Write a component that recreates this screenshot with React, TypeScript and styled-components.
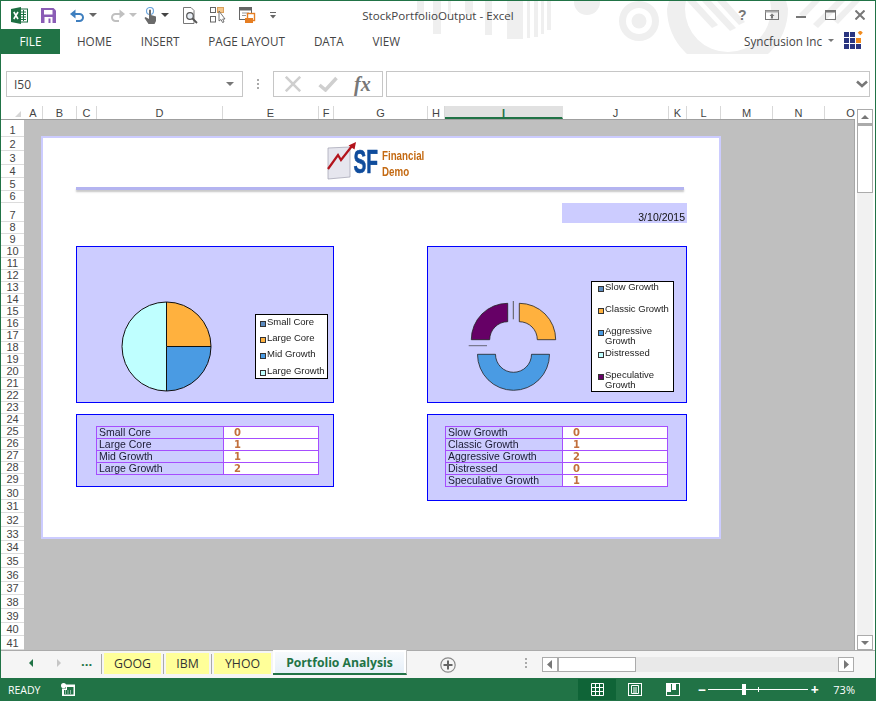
import React from 'react';
import styled, { createGlobalStyle } from 'styled-components';

const Global = createGlobalStyle`
  html, body {
    margin: 0;
    padding: 0;
    overflow: hidden;
    background: white;
  }
`;

const GREEN = '#217346';
const UI_FONT = '"Open Sans", "Noto Sans", sans-serif';
const CELL_FONT = '"Liberation Sans", Arial, sans-serif';

const Window = styled.div`
  width: 876px;
  height: 701px;
  box-sizing: border-box;
  border: 1px solid ${GREEN};
  border-bottom: none;
  display: flex;
  flex-direction: column;
  background: white;
  font-family: ${UI_FONT};
  color: #444;
  overflow: hidden;
`;

const Header = styled.div`
  position: relative;
  height: 53px;
  flex-shrink: 0;
`;

const Pattern = styled.svg`
  position: absolute;
  left: 0;
  top: 0;
  z-index: 0;
`;

const TitleBar = styled.div`
  position: relative;
  z-index: 1;
  height: 28px;
  display: grid;
  grid-template-columns: 1fr auto 1fr;
  align-items: center;
`;

const Quick = styled.div`
  display: flex;
  align-items: center;
  padding-left: 10px;
`;

const QuickSlot = styled.div<{ $w: number }>`
  width: ${p => p.$w}px;
  height: 20px;
  flex-shrink: 0;
  display: flex;
  align-items: center;
`;

const Title = styled.div`
  font-size: 11.6px;
  color: #444;
  white-space: nowrap;
`;

const Controls = styled.div`
  display: flex;
  justify-content: flex-end;
  align-items: center;
`;

const ControlSlot = styled.div`
  width: 29.5px;
  display: flex;
  justify-content: center;
  align-items: center;
`;

const TabRow = styled.div`
  position: relative;
  z-index: 1;
  height: 25px;
  display: flex;
  align-items: center;
  font-size: 11.7px;
`;

const FileTab = styled.div`
  width: 59px;
  height: 25px;
  box-sizing: border-box;
  padding-bottom: 2px;
  background: ${GREEN};
  color: white;
  display: flex;
  align-items: center;
  justify-content: center;
  margin-right: 17px;
`;

const RibbonTab = styled.div`
  margin-right: 29px;
  padding-bottom: 2px;
  white-space: nowrap;
`;

const Account = styled.div`
  margin-left: auto;
  display: flex;
  align-items: center;
  padding: 0 12px 2px 0;
  white-space: nowrap;
`;

const AccountCaret = styled.div`
  width: 0;
  height: 0;
  border-left: 3px solid transparent;
  border-right: 3px solid transparent;
  border-top: 3px solid #777;
  margin: 0 10px 0 6px;
`;

const FormulaBar = styled.div`
  height: 26px;
  margin-top: 17px;
  padding: 0 5px;
  display: flex;
  flex-shrink: 0;
  align-items: stretch;
`;

const NameBox = styled.div`
  width: 237px;
  box-sizing: border-box;
  border: 1px solid #c6c6c6;
  display: flex;
  align-items: center;
  justify-content: space-between;
  padding: 0 8px 0 7px;
  font-size: 12px;
  color: #444;
`;

const Caret = styled.div<{ $c?: string }>`
  width: 0;
  height: 0;
  border-left: 4px solid transparent;
  border-right: 4px solid transparent;
  border-top: 4px solid ${p => p.$c || '#777'};
`;

const GripDots = styled.div`
  width: 30px;
  display: flex;
  flex-direction: column;
  align-items: center;
  justify-content: center;
  gap: 2px;
`;

const GripDot = styled.div`
  width: 2px;
  height: 2px;
  background: #aaa;
`;

const FormulaButtons = styled.div`
  width: 110px;
  box-sizing: border-box;
  border: 1px solid #c6c6c6;
  display: flex;
  align-items: center;
  justify-content: space-around;
  padding: 0 3px;
  margin-right: 3px;
`;

const Fx = styled.span`
  font-family: "Liberation Serif", serif;
  font-style: italic;
  font-weight: bold;
  font-size: 20px;
  color: #777;
`;

const FormulaInput = styled.div`
  flex: 1;
  border: 1px solid #c6c6c6;
  display: flex;
  align-items: center;
  justify-content: flex-end;
  padding-right: 1px;
`;

const Main = styled.div`
  flex: 1;
  min-height: 0;
  margin-top: 9px;
  display: flex;
`;

const GridArea = styled.div`
  width: 854px;
  display: flex;
  flex-direction: column;
`;

const ColumnRow = styled.div`
  height: 13px;
  display: flex;
  flex-shrink: 0;
  box-sizing: content-box;
  border-bottom: 1px solid #9f9f9f;
  overflow: hidden;
`;

const Corner = styled.div`
  width: 23px;
  flex-shrink: 0;
  display: flex;
  align-items: flex-end;
  justify-content: flex-end;
  box-sizing: border-box;
  padding: 0 3px 2px 0;
`;

const CornerMark = styled.div`
  width: 0;
  height: 0;
  border-bottom: 6px solid #d6d6d6;
  border-left: 6px solid transparent;
`;

const ColumnCell = styled.div<{ $w: number; $active?: boolean }>`
  width: ${p => p.$w}px;
  flex-shrink: 0;
  box-sizing: border-box;
  border-right: 1px solid ${p => (p.$active ? '#e1e1e1' : '#d8d8d8')};
  border-bottom: ${p => (p.$active ? `2px solid ${GREEN}` : 'none')};
  background: ${p => (p.$active ? '#e1e1e1' : 'white')};
  color: ${p => (p.$active ? GREEN : '#444')};
  font-weight: ${p => (p.$active ? 'bold' : 'normal')};
  font-family: ${CELL_FONT};
  font-size: 11px;
  line-height: 14px;
  text-align: center;
  overflow: hidden;
`;

const SheetArea = styled.div`
  flex: 1;
  min-height: 0;
  display: flex;
`;

const RowHeaders = styled.div`
  width: 23px;
  flex-shrink: 0;
  display: flex;
  flex-direction: column;
`;

const RowCell = styled.div<{ $h?: number }>`
  ${p => (p.$h ? `height: ${p.$h}px;` : 'flex: 1;')}
  min-height: 0;
  box-sizing: border-box;
  border-bottom: 1px solid #dcdcdc;
  display: flex;
  align-items: flex-end;
  justify-content: center;
  font-family: ${CELL_FONT};
  font-size: 11px;
  line-height: 12px;
  color: #444;
  overflow: hidden;
`;

const Sheet = styled.div`
  flex: 1;
  min-width: 0;
  background: #bfbfbf;
  box-sizing: border-box;
  border-right: 1px solid #a6a6a6;
  padding: 16px 0 0 17px;
`;

const Page = styled.div`
  width: 680px;
  height: 403px;
  box-sizing: border-box;
  background: white;
  border: 2px solid #ccccff;
  padding: 4px 0 0 33px;
  font-family: ${CELL_FONT};
  color: #111;
  filter: blur(0.25px);
`;

const LogoRow = styled.div`
  height: 38px;
  width: 611px;
  display: flex;
  justify-content: center;
  align-items: flex-start;
  padding-right: 11px;
  box-sizing: border-box;
`;

const LogoMark = styled.svg`
  margin-right: -4px;
  flex-shrink: 0;
`;

const SfMark = styled.div`
  width: 29px;
  margin-top: 3px;
  padding-left: 1px;
  box-sizing: border-box;
  font-family: "Liberation Sans", sans-serif;
  font-weight: bold;
  font-size: 33px;
  line-height: 33px;
  color: #0f4c9c;
  -webkit-text-stroke: 0.7px #0f4c9c;
  transform: scaleX(0.58);
  transform-origin: left center;
`;

const LogoWords = styled.div`
  width: 43px;
  padding-top: 6px;
  font-weight: bold;
  font-size: 12.5px;
  line-height: 16px;
  color: #c46a13;
  transform: scaleX(0.78);
  transform-origin: left center;
  white-space: nowrap;
`;

const Rule = styled.div`
  width: 608px;
  height: 3px;
  margin-top: 7px;
  background: #b4b4f0;
  box-shadow: 0 2px 2px rgba(90, 90, 90, 0.35);
`;

const DateRow = styled.div`
  width: 611px;
  display: flex;
  justify-content: flex-end;
  margin-top: 13px;
`;

const DateBox = styled.div`
  width: 125px;
  height: 20px;
  box-sizing: border-box;
  background: #ccccff;
  display: flex;
  align-items: flex-end;
  justify-content: flex-end;
  padding-right: 2px;
  font-size: 10.5px;
  line-height: 11px;
`;

const PanelGrid = styled.div`
  display: grid;
  grid-template-columns: 258px 260px;
  column-gap: 93px;
  row-gap: 11px;
  margin-top: 23px;
`;

const Panel = styled.div<{ $h: number }>`
  height: ${p => p.$h}px;
  box-sizing: border-box;
  background: #ccccff;
  border: 1px solid #0000ff;
`;

const ChartPanel = styled(Panel)<{ $left: number; $gap: number }>`
  display: flex;
  align-items: flex-end;
  padding: 0 0 10px ${p => p.$left}px;
  gap: ${p => p.$gap}px;
`;

const TablePanel = styled(Panel)<{ $left: number }>`
  padding: 11px 0 0 ${p => p.$left}px;
`;

const Legend = styled.div<{ $w: number; $h: number; $up: number; $padTop: number; $padLeft: number }>`
  width: ${p => p.$w}px;
  height: ${p => p.$h}px;
  margin-bottom: ${p => p.$up}px;
  box-sizing: border-box;
  background: white;
  border: 1px solid black;
  padding: ${p => p.$padTop}px 0 0 ${p => p.$padLeft}px;
  font-size: 9.5px;
  line-height: 10px;
  color: #222;
`;

const LegendItem = styled.div<{ $h: number }>`
  height: ${p => p.$h}px;
  display: flex;
  align-items: flex-start;
  gap: 1px;
`;

const Swatch = styled.div<{ $c: string }>`
  width: 4px;
  height: 4px;
  margin-top: 4px;
  flex-shrink: 0;
  background: ${p => p.$c};
  border: 1px solid #333;
`;

const DataTable = styled.table<{ $first: number; $second: number }>`
  border-collapse: collapse;
  table-layout: fixed;
  width: ${p => p.$first + p.$second}px;
  font-size: 10.5px;

  td {
    height: 11px;
    padding: 0;
    border: 1px solid #a64dff;
    line-height: 11px;
    overflow: hidden;
    white-space: nowrap;
  }
`;

const LabelCell = styled.td`
  padding-left: 2px !important;
  color: #1a1a33;
`;

const ValueCell = styled.td`
  padding-left: 10px !important;
  background: white;
  color: #c2703d;
  font-family: "DejaVu Sans", sans-serif;
  font-size: 10px;
  font-weight: bold;
`;

const Scrollbar = styled.div`
  width: 16px;
  margin: 3px 0 0 2px;
  display: flex;
  flex-direction: column;
  background: #f1f1f1;
`;

const ScrollButton = styled.div<{ $size?: number }>`
  width: 16px;
  height: ${p => p.$size || 15}px;
  flex-shrink: 0;
  box-sizing: border-box;
  border: 1px solid #ababab;
  background: white;
  display: flex;
  align-items: center;
  justify-content: center;
`;

const ScrollThumb = styled.div`
  height: 69px;
  box-sizing: border-box;
  background: white;
  border: 1px solid #ababab;
  border-top-width: 2px;
`;

const ScrollFill = styled.div`
  flex: 1;
`;

const UpArrow = styled.div`
  width: 0;
  height: 0;
  border-left: 4px solid transparent;
  border-right: 4px solid transparent;
  border-bottom: 4px solid #777;
`;

const SheetStrip = styled.div`
  height: 28px;
  flex-shrink: 0;
  box-sizing: border-box;
  background: #f5f5f5;
  border-top: 1px solid #ababab;
  display: flex;
  align-items: flex-start;
`;

const SheetNav = styled.div`
  width: 98px;
  height: 24px;
  display: flex;
  align-items: center;
  padding-left: 28px;
  box-sizing: border-box;
`;

const NavArrow = styled.div<{ $dir: 'left' | 'right' }>`
  width: 0;
  height: 0;
  border-top: 4px solid transparent;
  border-bottom: 4px solid transparent;
  ${p =>
    p.$dir === 'left'
      ? `border-right: 4px solid ${GREEN};`
      : `border-left: 4px solid #c6c6c6; margin-left: 24px;`}
`;

const NavMore = styled.div`
  margin-left: 20px;
  color: ${GREEN};
  font-weight: bold;
  font-size: 13px;
  line-height: 13px;
  padding-bottom: 3px;
`;

const TabSep = styled.div`
  width: 1px;
  height: 20px;
  margin: 3px 2px 0;
  background: #aaa;
`;

const SheetTab = styled.div<{ $w: number }>`
  width: ${p => p.$w}px;
  height: 21px;
  margin-top: 2px;
  background: #ffff99;
  display: flex;
  align-items: center;
  justify-content: center;
  font-size: 12.3px;
  color: #333;
`;

const ActiveTab = styled.div`
  width: 134px;
  height: 25px;
  margin: -1px 0 0 2px;
  box-sizing: border-box;
  background: white;
  padding: 0 2px;
  border-bottom: 2px solid ${GREEN};
  border-right: 1px solid #c6c6c6;
`;

const ActiveLabel = styled.div`
  height: 21px;
  margin-top: 2px;
  background: linear-gradient(#f7fafd, #e6eff8);
  display: flex;
  align-items: center;
  justify-content: center;
  font-size: 12.2px;
  font-weight: bold;
  color: ${GREEN};
`;

const AddSheet = styled.div`
  width: 16px;
  height: 16px;
  margin: 5px 0 0 33px;
`;

const StripGrip = styled(GripDots)`
  width: 4px;
  height: 24px;
  margin-left: 68px;
`;

const HScroll = styled.div`
  width: 312px;
  height: 15px;
  margin: 6px 0 0 14px;
  display: flex;
  background: #e9e9e9;
`;

const HThumb = styled.div`
  width: 78px;
  box-sizing: border-box;
  background: white;
  border: 1px solid #ababab;
`;

const StatusBar = styled.div`
  height: 23px;
  flex-shrink: 0;
  background: ${GREEN};
  color: white;
  display: flex;
  align-items: center;
  font-size: 10.5px;
`;

const Ready = styled.div`
  margin-left: 7px;
  width: 53px;
`;

const ViewGroup = styled.div`
  display: flex;
  margin-right: 6px;
`;

const ViewButton = styled.div<{ $on?: boolean }>`
  width: 38px;
  height: 21px;
  background: ${p => (p.$on ? '#0f6437' : 'transparent')};
  display: flex;
  align-items: center;
  justify-content: center;
`;

const ZoomTrack = styled.div`
  position: relative;
  width: 100px;
  height: 1px;
  background: white;
  margin: 0 3px;
`;

const ZoomThumb = styled.div`
  position: absolute;
  left: 34px;
  top: -5px;
  width: 4px;
  height: 11px;
  background: white;
`;

const ZoomTick = styled.div`
  position: absolute;
  left: 50px;
  top: -2px;
  width: 1px;
  height: 5px;
  background: white;
`;

const ZoomSign = styled.div`
  width: 7px;
  display: flex;
  justify-content: center;
  font-weight: bold;
  font-size: 14px;
`;

const ZoomValue = styled.div`
  margin-left: 15px;
  font-size: 11px;
`;

const StatusGroup = styled.div`
  margin-left: auto;
  display: flex;
  align-items: center;
  padding-right: 20px;
`;

const HelpMark = styled.span`
  font-family: "Liberation Sans", sans-serif;
  font-weight: bold;
  font-size: 14px;
  line-height: 14px;
  color: #777;
`;

const columns: [string, number][] = [
  ['A', 19], ['B', 34], ['C', 20], ['D', 126], ['E', 96], ['F', 15], ['G', 94], ['H', 17],
  ['I', 118], ['J', 106], ['K', 18], ['L', 34], ['M', 52], ['N', 52], ['O', 52],
];

const rowHeights: (number | undefined)[] = [
  17, 14, 14, 13, 13, 12, 19,
  ...Array(22).fill(12),
  ...Array(12).fill(undefined),
];

const leftLegend = [
  { label: 'Small Core', color: '#5b8bc0', h: 16 },
  { label: 'Large Core', color: '#ffb13e', h: 16 },
  { label: 'Mid Growth', color: '#4a9be3', h: 17 },
  { label: 'Large Growth', color: '#bfffff', h: 12 },
];

const rightLegend = [
  { label: 'Slow Growth', color: '#5b8bc0', h: 22 },
  { label: 'Classic Growth', color: '#ffb13e', h: 22 },
  { label: 'Aggressive Growth', color: '#4a9be3', h: 22 },
  { label: 'Distressed', color: '#bfffff', h: 22 },
  { label: 'Speculative Growth', color: '#660066', h: 21 },
];

const leftRows: [string, number][] = [['Small Core', 0], ['Large Core', 1], ['Mid Growth', 1], ['Large Growth', 2]];
const rightRows: [string, number][] = [
  ['Slow Growth', 0], ['Classic Growth', 1], ['Aggressive Growth', 2], ['Distressed', 0], ['Speculative Growth', 1],
];

const HeaderPattern = () => (
  <Pattern width={874} height={53} viewBox="0 0 874 53">
    <g fill="#efefef">
      <rect x={416} width={7} height={16} />
      <rect x={432} width={8} height={33} />
      <rect x={447} width={3} height={14} />
      <path d="M464 0h8v10a6 6 0 0 0 1 5h-6a10 10 0 0 1-3-8z" />
      <rect x={484} width={7} height={34} />
      <rect x={506} width={16} height={38} />
      <rect x={526} width={3} height={37} />
      <rect x={533} width={4} height={36} />
      <rect x={540} width={3} height={33} />
      <rect x={546} width={4} height={29} />
      <circle cx={586} cy={1} r={13} />
      <path fillRule="evenodd" d="M618 20a20 20 0 1 0 40 0a20 20 0 1 0-40 0zM625 20a13 13 0 1 1 26 0a13 13 0 1 1-26 0z" />
      <circle cx={638} cy={20} r={7.5} />
      <path fillRule="evenodd" d="M666 8a60.5 60.5 0 0 0 121 0a60.5 60.5 0 0 0-2-8H668a60.5 60.5 0 0 0-2 8zM684 8a43 43 0 0 0 86 0a43 43 0 0 0-1-8H685a43 43 0 0 0-1 8z" />
      <path d="M686 0l25 27 6-3-22-24zM701 0l28 30 6-3-25-27zM716 0l22 24 6-3-19-21z" />
      <path d="M798 13l13-13h8l-16 17zM812 23l23-23h9l-27 27zM832 19l19-19h8l-22 23z" />
    </g>
  </Pattern>
);

const ExcelIcon = () => (
  <svg width={17} height={17} viewBox="0 0 17 17">
    <rect x={8} y={2} width={8.5} height={13} fill="white" stroke="#1d6f42" />
    <path d="M10 5h5M10 7.5h5M10 10h5M10 12.5h5M12.5 3v11" stroke="#1d6f42" strokeWidth={1} />
    <path d="M0 2L10 0V17L0 15Z" fill="#1d6f42" />
    <path d="M2.8 5L7 12M7 5L2.8 12" stroke="white" strokeWidth={1.6} />
  </svg>
);

const SaveIcon = () => (
  <svg width={15} height={15} viewBox="0 0 15 15">
    <path d="M0 0H12.5L15 2.5V15H0Z" fill="#8a5cb5" />
    <rect x={3} y={2} width={8.5} height={4.5} fill="white" />
    <rect x={3.5} y={9} width={8} height={6} fill="white" />
    <rect x={7.5} y={10.5} width={2} height={4.5} fill="#8a5cb5" />
  </svg>
);

const UndoIcon = ({ color }: { color: string }) => (
  <svg width={15} height={13} viewBox="0 0 15 13">
    <path d="M3 5H9.5a3.5 3.5 0 0 1 0 7H6" fill="none" stroke={color} strokeWidth={2} />
    <path d="M5.5 0.5V9.5L0 5Z" fill={color} />
  </svg>
);

const RedoIcon = ({ color }: { color: string }) => (
  <svg width={15} height={13} viewBox="0 0 15 13">
    <path d="M12 5H5.5a3.5 3.5 0 0 0 0 7H9" fill="none" stroke={color} strokeWidth={2} />
    <path d="M9.5 0.5V9.5L15 5Z" fill={color} />
  </svg>
);

const TouchIcon = () => (
  <svg width={14} height={17} viewBox="0 0 14 17">
    <circle cx={6} cy={4} r={3.5} fill="none" stroke="#6ea6dc" strokeWidth={1.2} />
    <path d="M5 3.5a1 1 0 0 1 2 0V8l5 1.5V14l-1.5 3H4.5L0.5 11l1-1L5 12Z" fill="#6a6a6a" />
  </svg>
);

const PreviewIcon = () => (
  <svg width={15} height={17} viewBox="0 0 15 17">
    <path d="M0.5 0.5H8L11 3.5V16.5H0.5Z" fill="white" stroke="#777" />
    <circle cx={7} cy={9} r={3.3} fill="#e8eef5" stroke="#555" strokeWidth={1.2} />
    <path d="M9.5 11.5L14 16" stroke="#555" strokeWidth={1.8} />
  </svg>
);

const SelectIcon = () => (
  <svg width={16} height={16} viewBox="0 0 16 16">
    <rect x={0.5} y={0.5} width={5} height={5} fill="white" stroke="#666" />
    <rect x={0.5} y={9.5} width={5} height={5.5} fill="white" stroke="#666" />
    <rect x={7.5} y={0.5} width={6} height={5} fill="#f4c68c" stroke="#d9a05c" />
    <path d="M9 4V14L11 12.5L12.5 15.5L14 15L12.7 12H15Z" fill="white" stroke="#555" strokeWidth={0.8} />
  </svg>
);

const FormIcon = () => (
  <svg width={18} height={17} viewBox="0 0 18 17">
    <rect x={0.5} y={0.5} width={12} height={12} fill="white" stroke="#666" />
    <rect x={0.5} y={0.5} width={12} height={3} fill="#666" />
    <path d="M3 6h7M3 8.5h4" stroke="#999" />
    <rect x={8.5} y={6.5} width={7} height={7} fill="white" stroke="#e67e22" strokeWidth={1.4} />
    <rect x={6} y={11} width={8} height={5} fill="#e67e22" />
  </svg>
);

const CustomizeIcon = () => (
  <svg width={7} height={7} viewBox="0 0 7 7">
    <rect y={0} width={6} height={1} fill="#666" />
    <path d="M0 3H6L3 6.5Z" fill="#666" />
  </svg>
);

const RibbonDisplayIcon = () => (
  <svg width={14} height={10} viewBox="0 0 14 10">
    <rect x={0.5} y={0.5} width={13} height={9} fill="none" stroke="#777" />
    <rect x={0.5} y={0.5} width={13} height={2} fill="#aaa" />
    <path d="M7 3.5L9.5 6H8V8.5H6V6H4.5Z" fill="#777" />
  </svg>
);

const MinIcon = () => (
  <svg width={10} height={10} viewBox="0 0 10 10">
    <rect y={6} width={10} height={2} fill="#777" />
  </svg>
);

const MaxIcon = () => (
  <svg width={11} height={10} viewBox="0 0 11 10">
    <rect x={0.5} y={0.5} width={10} height={9} fill="none" stroke="#777" />
    <rect x={0.5} y={0.5} width={10} height={2} fill="#777" />
  </svg>
);

const CloseIcon = ({ size = 10, color = '#777', width = 2 }: { size?: number; color?: string; width?: number }) => (
  <svg width={size} height={size} viewBox="0 0 10 10">
    <path d="M0.5 0.5L9.5 9.5M9.5 0.5L0.5 9.5" stroke={color} strokeWidth={width} />
  </svg>
);

const SyncfusionLogo = () => (
  <svg width={19} height={19} viewBox="0 0 19 19">
    <g fill="#2a3580">
      <rect x={0} y={1} width={5} height={5} />
      <rect x={6} y={1} width={5} height={5} />
      <rect x={0} y={7} width={5} height={5} />
      <rect x={6} y={7} width={5} height={5} />
      <rect x={0} y={13} width={5} height={5} />
      <rect x={6} y={13} width={5} height={5} />
      <rect x={12} y={13} width={5} height={5} />
    </g>
    <rect x={12} y={7} width={5} height={5} fill="#f28c1e" />
    <rect x={14.5} y={0} width={3.6} height={3.6} fill="#f28c1e" transform="rotate(45 16.3 1.8)" />
  </svg>
);

const CheckIcon = () => (
  <svg width={20} height={16} viewBox="0 0 20 16">
    <path d="M1.5 9L7.5 14L18.5 2" fill="none" stroke="#cfcfcf" strokeWidth={3.5} />
  </svg>
);

const ChevronDown = () => (
  <svg width={12} height={8} viewBox="0 0 12 8">
    <path d="M1 1.5L6 6L11 1.5" fill="none" stroke="#777" strokeWidth={2.6} />
  </svg>
);

const PieChart = () => (
  <svg width={91} height={91} viewBox="0 0 91 91">
    <g stroke="#111" strokeWidth={1}>
      <path d="M45.5 45.5V1A44.5 44.5 0 0 1 90 45.5Z" fill="#ffb13e" />
      <path d="M45.5 45.5H90A44.5 44.5 0 0 1 45.5 90Z" fill="#4a9be3" />
      <path d="M45.5 45.5V90A44.5 44.5 0 0 1 45.5 1Z" fill="#bfffff" />
    </g>
  </svg>
);

const DoughnutChart = () => (
  <svg width={90} height={91} viewBox="0 0 90 91">
    <g stroke="#222" strokeWidth={0.8}>
      <path d="M51.3 2.3A36.4 36.4 0 0 1 87.7 38.7H69.3A18 18 0 0 0 51.3 20.7Z" fill="#ffb13e" />
      <path d="M39.7 2.3A36.4 36.4 0 0 0 3.3 38.7H21.7A18 18 0 0 1 39.7 20.7Z" fill="#660066" />
      <path d="M9.5 53.3A36 36 0 0 0 81.5 53.3H63.5A18 18 0 0 1 27.5 53.3Z" fill="#4a9be3" />
    </g>
    <path d="M45.3 0V18.3" stroke="#555" strokeWidth={1} />
    <path d="M0.7 44.7H19" stroke="#667" strokeWidth={1} />
  </svg>
);

const StockArrow = () => (
  <LogoMark width={30} height={38} viewBox="0 0 30 38">
    <path d="M1 6L23 5V35L1 37Z" fill="#e6e6ee" stroke="#a8a8b8" strokeWidth={0.8} />
    <path d="M1 27L11 13L14 18L25 4" fill="none" stroke="#b3141c" strokeWidth={2.2} />
    <path d="M21.5 3.5L29 0L27.5 7.5Z" fill="#b3141c" />
  </LogoMark>
);

const ArrowLeft = () => (
  <svg width={6} height={9} viewBox="0 0 6 9">
    <path d="M5 0V9L0 4.5Z" fill="#777" />
  </svg>
);

const ArrowRight = () => (
  <svg width={6} height={9} viewBox="0 0 6 9">
    <path d="M1 0V9L6 4.5Z" fill="#777" />
  </svg>
);

const AddIcon = () => (
  <svg width={16} height={16} viewBox="0 0 16 16">
    <circle cx={8} cy={8} r={7.2} fill="none" stroke="#8a8a8a" strokeWidth={1.2} />
    <path d="M8 3.5V12.5M3.5 8H12.5" stroke="#666" strokeWidth={2} />
  </svg>
);

const MacroIcon = () => (
  <svg width={14} height={13} viewBox="0 0 14 13">
    <circle cx={2.6} cy={2.6} r={2.6} fill="white" />
    <path d="M5 1.5H14V13H1V5.5H5ZM3 7V11.5H12.5V4H6V7Z" fill="white" />
    <path d="M4 8h1M6.5 8h1M9 8h1M4 10h1M6.5 10h1M9 10h1" stroke="white" />
  </svg>
);

const GridViewIcon = () => (
  <svg width={13} height={13} viewBox="0 0 13 13">
    <path d="M0.5 0.5H12.5V12.5H0.5ZM4.5 0.5V12.5M8.5 0.5V12.5M0.5 4.5H12.5M0.5 8.5H12.5" fill="none" stroke="white" />
  </svg>
);

const PageViewIcon = () => (
  <svg width={14} height={13} viewBox="0 0 14 13">
    <rect x={0.5} y={0.5} width={13} height={12} fill="none" stroke="white" />
    <path d="M3.5 2.5H10.5V10.5H3.5ZM5 5H9M5 7H9M5 9H9" fill="none" stroke="white" />
  </svg>
);

const BreakViewIcon = () => (
  <svg width={14} height={13} viewBox="0 0 14 13">
    <rect x={0.5} y={0.5} width={13} height={12} fill="none" stroke="white" />
    <rect x={1} y={1} width={4} height={8} fill="white" />
    <rect x={6} y={1} width={4} height={6} fill="white" />
  </svg>
);

type LegendProps = {
  items: typeof leftLegend;
  w: number;
  h: number;
  up: number;
  padTop: number;
  padLeft: number;
};

const LegendBox = ({ items, w, h, up, padTop, padLeft }: LegendProps) => (
  <Legend $w={w} $h={h} $up={up} $padTop={padTop} $padLeft={padLeft}>
    {items.map(item => (
      <LegendItem key={item.label} $h={item.h}>
        <Swatch $c={item.color} />
        <span>{item.label}</span>
      </LegendItem>
    ))}
  </Legend>
);

const CountTable = ({ rows, first, second }: { rows: [string, number][]; first: number; second: number }) => (
  <DataTable $first={first} $second={second}>
    <colgroup>
      <col style={{ width: first }} />
      <col style={{ width: second }} />
    </colgroup>
    <tbody>
      {rows.map(([label, value]) => (
        <tr key={label}>
          <LabelCell>{label}</LabelCell>
          <ValueCell>{value}</ValueCell>
        </tr>
      ))}
    </tbody>
  </DataTable>
);

export default function App() {
  return (
    <Window>
      <Global />
      <Header>
        <HeaderPattern />
        <TitleBar>
          <Quick>
            <QuickSlot $w={30}><ExcelIcon /></QuickSlot>
            <QuickSlot $w={29}><SaveIcon /></QuickSlot>
            <QuickSlot $w={19}><UndoIcon color="#3f7fbf" /></QuickSlot>
            <QuickSlot $w={21}><Caret $c="#666" /></QuickSlot>
            <QuickSlot $w={19}><RedoIcon color="#c0c0c0" /></QuickSlot>
            <QuickSlot $w={15}><Caret $c="#c0c0c0" /></QuickSlot>
            <QuickSlot $w={17}><TouchIcon /></QuickSlot>
            <QuickSlot $w={22}><Caret $c="#444" /></QuickSlot>
            <QuickSlot $w={27}><PreviewIcon /></QuickSlot>
            <QuickSlot $w={29}><SelectIcon /></QuickSlot>
            <QuickSlot $w={31}><FormIcon /></QuickSlot>
            <QuickSlot $w={10}><CustomizeIcon /></QuickSlot>
          </Quick>
          <Title>StockPortfolioOutput - Excel</Title>
          <Controls>
            <ControlSlot><HelpMark>?</HelpMark></ControlSlot>
            <ControlSlot><RibbonDisplayIcon /></ControlSlot>
            <ControlSlot><MinIcon /></ControlSlot>
            <ControlSlot><MaxIcon /></ControlSlot>
            <ControlSlot><CloseIcon /></ControlSlot>
          </Controls>
        </TitleBar>
        <TabRow>
          <FileTab>FILE</FileTab>
          <RibbonTab>HOME</RibbonTab>
          <RibbonTab>INSERT</RibbonTab>
          <RibbonTab>PAGE LAYOUT</RibbonTab>
          <RibbonTab>DATA</RibbonTab>
          <RibbonTab>VIEW</RibbonTab>
          <Account>
            Syncfusion Inc
            <AccountCaret />
            <SyncfusionLogo />
          </Account>
        </TabRow>
      </Header>

      <FormulaBar>
        <NameBox>
          I50
          <Caret />
        </NameBox>
        <GripDots>
          <GripDot />
          <GripDot />
          <GripDot />
        </GripDots>
        <FormulaButtons>
          <CloseIcon size={16} color="#cfcfcf" width={1.6} />
          <CheckIcon />
          <Fx>fx</Fx>
        </FormulaButtons>
        <FormulaInput>
          <ChevronDown />
        </FormulaInput>
      </FormulaBar>

      <Main>
        <GridArea>
          <ColumnRow>
            <Corner><CornerMark /></Corner>
            {columns.map(([name, w]) => (
              <ColumnCell key={name} $w={w} $active={name === 'I'}>{name}</ColumnCell>
            ))}
          </ColumnRow>
          <SheetArea>
            <RowHeaders>
              {rowHeights.map((h, i) => (
                <RowCell key={i} $h={h}>{i + 1}</RowCell>
              ))}
            </RowHeaders>
            <Sheet>
              <Page>
                <LogoRow>
                  <StockArrow />
                  <SfMark>SF</SfMark>
                  <LogoWords>Financial<br />Demo</LogoWords>
                </LogoRow>
                <Rule />
                <DateRow>
                  <DateBox>3/10/2015</DateBox>
                </DateRow>
                <PanelGrid>
                  <ChartPanel $h={157} $left={44} $gap={43}>
                    <PieChart />
                    <LegendBox items={leftLegend} w={73} h={65} up={13} padTop={2} padLeft={4} />
                  </ChartPanel>
                  <ChartPanel $h={157} $left={40} $gap={33}>
                    <DoughnutChart />
                    <LegendBox items={rightLegend} w={83} h={111} up={0} padTop={0} padLeft={6} />
                  </ChartPanel>
                  <TablePanel $h={73} $left={19}>
                    <CountTable rows={leftRows} first={127} second={95} />
                  </TablePanel>
                  <TablePanel $h={87} $left={17}>
                    <CountTable rows={rightRows} first={117} second={105} />
                  </TablePanel>
                </PanelGrid>
              </Page>
            </Sheet>
          </SheetArea>
        </GridArea>
        <Scrollbar>
          <ScrollButton><UpArrow /></ScrollButton>
          <ScrollThumb />
          <ScrollFill />
          <ScrollButton><Caret /></ScrollButton>
        </Scrollbar>
      </Main>

      <SheetStrip>
        <SheetNav>
          <NavArrow $dir="left" />
          <NavArrow $dir="right" />
          <NavMore>...</NavMore>
        </SheetNav>
        <TabSep />
        <SheetTab $w={57}>GOOG</SheetTab>
        <TabSep />
        <SheetTab $w={43}>IBM</SheetTab>
        <TabSep />
        <SheetTab $w={57}>YHOO</SheetTab>
        <ActiveTab>
          <ActiveLabel>Portfolio Analysis</ActiveLabel>
        </ActiveTab>
        <AddSheet><AddIcon /></AddSheet>
        <StripGrip>
          <GripDot />
          <GripDot />
          <GripDot />
        </StripGrip>
        <HScroll>
          <ScrollButton><ArrowLeft /></ScrollButton>
          <HThumb />
          <ScrollFill />
          <ScrollButton><ArrowRight /></ScrollButton>
        </HScroll>
      </SheetStrip>

      <StatusBar>
        <Ready>READY</Ready>
        <MacroIcon />
        <StatusGroup>
          <ViewGroup>
            <ViewButton $on><GridViewIcon /></ViewButton>
            <ViewButton><PageViewIcon /></ViewButton>
            <ViewButton><BreakViewIcon /></ViewButton>
          </ViewGroup>
          <ZoomSign>−</ZoomSign>
          <ZoomTrack>
            <ZoomThumb />
            <ZoomTick />
          </ZoomTrack>
          <ZoomSign>+</ZoomSign>
          <ZoomValue>73%</ZoomValue>
        </StatusGroup>
      </StatusBar>
    </Window>
  );
}
